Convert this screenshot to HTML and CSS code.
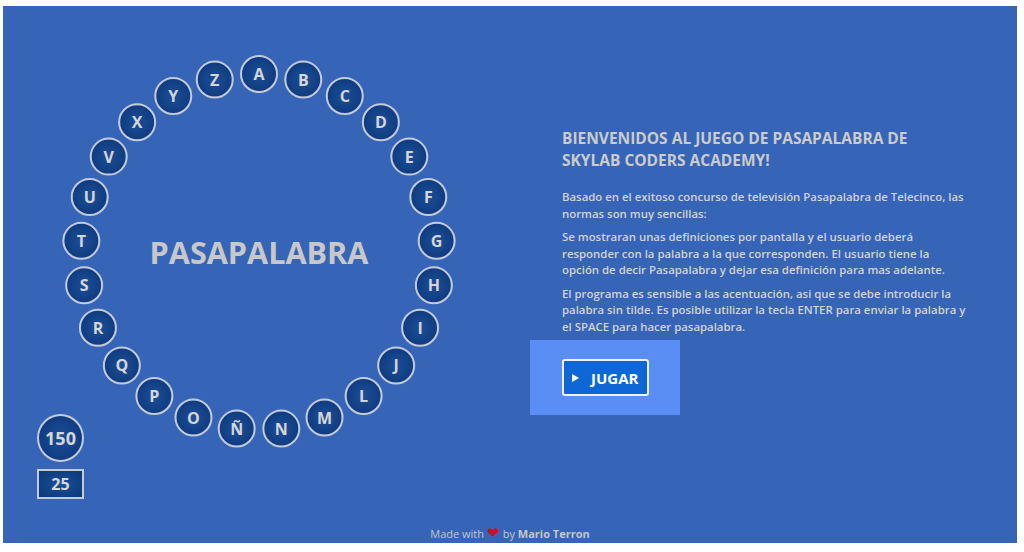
FILE: index.html
```html
<!DOCTYPE html>
<html lang="es">
<head>
<meta charset="utf-8">
<title>Pasapalabra</title>
<link rel="stylesheet" href="styles.css">
</head>
<body>
<div class="panel">
  <div class="main">
    <div class="left">
      <div class="rosco">
        <div class="letter" style="--i:0">A</div>
        <div class="letter" style="--i:1">B</div>
        <div class="letter" style="--i:2">C</div>
        <div class="letter" style="--i:3">D</div>
        <div class="letter" style="--i:4">E</div>
        <div class="letter" style="--i:5">F</div>
        <div class="letter" style="--i:6">G</div>
        <div class="letter" style="--i:7">H</div>
        <div class="letter" style="--i:8">I</div>
        <div class="letter" style="--i:9">J</div>
        <div class="letter" style="--i:10">L</div>
        <div class="letter" style="--i:11">M</div>
        <div class="letter" style="--i:12">N</div>
        <div class="letter" style="--i:13">Ñ</div>
        <div class="letter" style="--i:14">O</div>
        <div class="letter" style="--i:15">P</div>
        <div class="letter" style="--i:16">Q</div>
        <div class="letter" style="--i:17">R</div>
        <div class="letter" style="--i:18">S</div>
        <div class="letter" style="--i:19">T</div>
        <div class="letter" style="--i:20">U</div>
        <div class="letter" style="--i:21">V</div>
        <div class="letter" style="--i:22">X</div>
        <div class="letter" style="--i:23">Y</div>
        <div class="letter" style="--i:24">Z</div>
        <h1 class="title">PASAPALABRA</h1>
      </div>
      <div class="score">
        <div class="points">150</div>
        <div class="count">25</div>
      </div>
    </div>
    <div class="right">
      <h2 class="heading">BIENVENIDOS AL JUEGO DE PASAPALABRA DE SKYLAB CODERS ACADEMY!</h2>
      <p class="text">Basado en el exitoso concurso de televisión Pasapalabra de Telecinco, las normas son muy sencillas:</p>
      <p class="text">Se mostraran unas definiciones por pantalla y el usuario deberá responder con la palabra a la que corresponden. El usuario tiene la opción de decir Pasapalabra y dejar esa definición para mas adelante.</p>
      <p class="text">El programa es sensible a las acentuación, asi que se debe introducir la palabra sin tilde. Es posible utilizar la tecla ENTER para enviar la palabra y el SPACE para hacer pasapalabra.</p>
      <div class="start">
        <button class="play"><span class="tri"></span>JUGAR</button>
      </div>
    </div>
  </div>
  <footer class="footer">Made with <span class="heart">&#10084;</span> by <b>Mario Terron</b></footer>
</div>
</body>
</html>
```
FILE: styles.css
```css
* { box-sizing: border-box; }
html, body { margin: 0; padding: 0; background: #fff; }
body {
  font-family: "Open Sans", "Liberation Sans", sans-serif;
  color: #cdcdcd;
}
.panel {
  margin: 6px 7px 9px 3px;
  height: 537px;
  background: #3665b8;
  display: flex;
  flex-direction: column;
}
.main {
  flex: 1;
  display: flex;
}
.left {
  width: 527px;
  flex: none;
  padding: 49px 0 0 34px;
  display: flex;
  flex-direction: column;
}
.rosco {
  position: relative;
  width: 394px;
  height: 394px;
  margin-left: 25px;
  display: flex;
  align-items: center;
  justify-content: center;
}
.letter {
  position: absolute;
  left: 178px;
  top: 178px;
  width: 38px;
  height: 38px;
  border-radius: 50%;
  border: 2px solid #c3cad8;
  background: radial-gradient(circle at 50% 50%, #1b4f98 0%, #123f84 60%, #0b3776 100%);
  color: #d6d6d6;
  font-weight: 700;
  font-size: 16px;
  display: flex;
  align-items: center;
  justify-content: center;
  transform: rotate(calc(var(--i) * 14.4deg)) translateY(-178px) rotate(calc(var(--i) * -14.4deg));
}
.title {
  margin: 0;
  font-size: 30.6px;
  font-weight: 700;
  color: #c8c8c8;
}
.score {
  margin-top: -35px;
  display: flex;
  flex-direction: column;
  gap: 7px;
  align-items: flex-start;
}
.points {
  width: 47px;
  height: 48px;
  border-radius: 50%;
  border: 2px solid #c3cad8;
  background: radial-gradient(circle at 50% 50%, #1b4f98 0%, #123f84 60%, #0b3776 100%);
  color: #d6d6d6;
  font-weight: 700;
  font-size: 18px;
  display: flex;
  align-items: center;
  justify-content: center;
}
.count {
  width: 47px;
  height: 30px;
  border: 2px solid #c3cad8;
  background: radial-gradient(ellipse at 50% 50%, #1b4f98 0%, #0b3776 100%);
  color: #d6d6d6;
  font-weight: 700;
  font-size: 16px;
  display: flex;
  align-items: center;
  justify-content: center;
}
.right {
  flex: 1;
  padding-top: 121px;
  display: flex;
  flex-direction: column;
  align-items: flex-start;
}
.heading {
  margin: 0 0 18px 32px;
  width: 380px;
  font-size: 15.5px;
  line-height: 22px;
  font-weight: 700;
  color: #cbcbcb;
}
.text {
  margin: 0 0 7px 32px;
  width: 404px;
  font-size: 11.4px;
  line-height: 16.5px;
  font-weight: 600;
  color: #d2d2d2;
}
.start {
  margin-top: -2px;
  width: 150px;
  height: 75px;
  background: #5a8ef5;
  padding: 19px 0 0 32px;
}
.play {
  height: 37px;
  padding: 0 9px 0 8px;
  border: 2px solid #eef2fa;
  border-radius: 3px;
  background: #0f67d6;
  color: #fff;
  font-family: "Open Sans", "Liberation Sans", sans-serif;
  font-weight: 700;
  font-size: 15px;
  display: flex;
  align-items: center;
  gap: 12px;
}
.tri {
  width: 0;
  height: 0;
  border-top: 4px solid transparent;
  border-bottom: 4px solid transparent;
  border-left: 7px solid #fff;
}
.footer {
  text-align: center;
  font-size: 11px;
  line-height: 14px;
  padding-bottom: 2px;
  color: #c6c6c6;
}
.footer b { font-weight: 700; }
.heart { color: #c4122a; font-size: 15px; line-height: 14px; }
```
